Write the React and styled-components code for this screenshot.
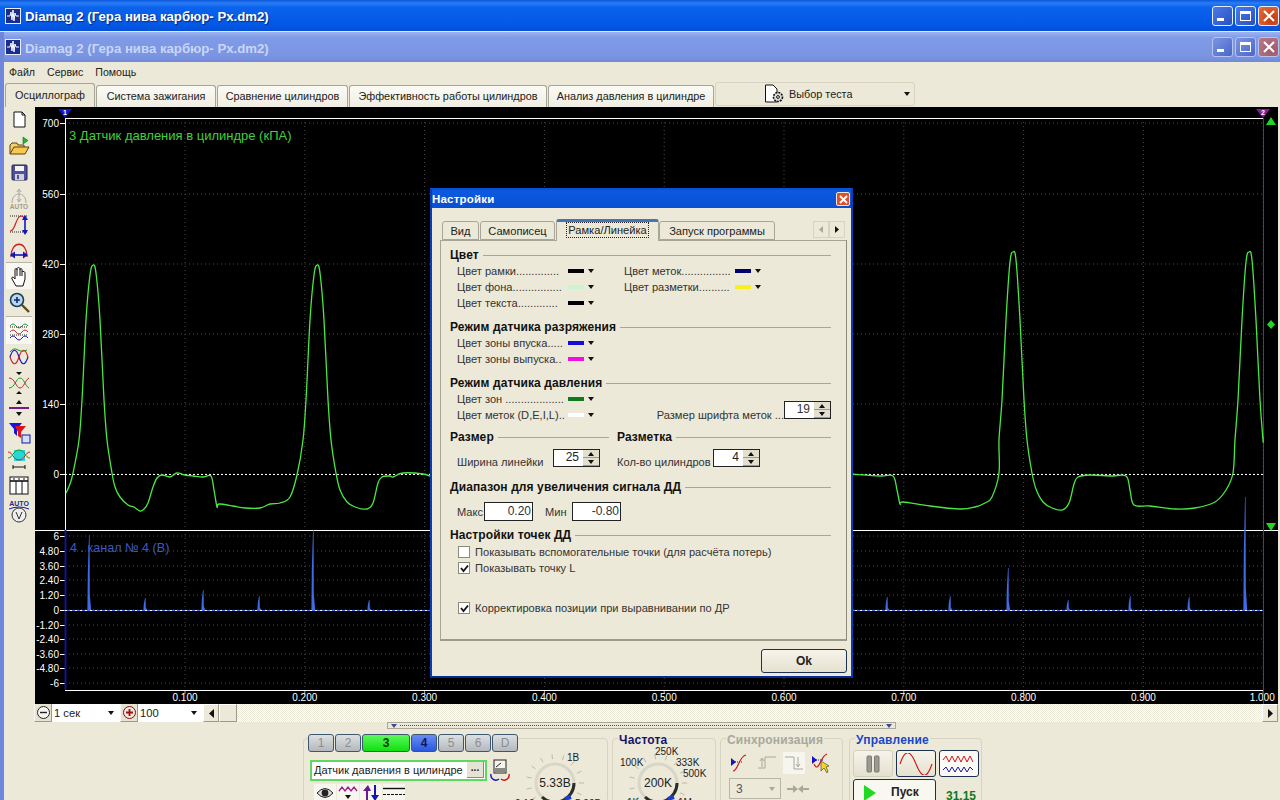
import React from "react";
import styled, { createGlobalStyle } from "styled-components";

const GlobalStyle = createGlobalStyle`
  html, body { margin: 0; padding: 0; overflow: hidden; background: #ece9d8; }
  body { font-family: "Liberation Sans", Arial, sans-serif; font-size: 11px; color: #222; }
  * { box-sizing: border-box; }
`;

/* ---------- chart data ---------- */
const peak = (cx, top) => [
  [cx - 14, 440], [cx - 11, 400], [cx - 7, 320], [cx - 3, top + 10], [cx, top],
  [cx + 3, top + 8], [cx + 7, 320], [cx + 11, 400], [cx + 14, 440],
];
const curveLeft = [
  [66, 493], [70, 484], [73, 473], ...peak(93, 265),
  [112, 473], [115, 487], [120, 497], [128, 505], [134, 507], [140, 511], [144, 509], [148, 503], [153, 487], [157, 478],
  [162, 475], [170, 477], [177, 473], [185, 475], [193, 476], [203, 477], [211, 476], [214, 490], [217, 507], [219, 504],
  [233, 506], [245, 508], [260, 508], [270, 504], [280, 503], [290, 497], [297, 475], ...peak(317, 265),
  [336, 473], [340, 490], [347, 502], [355, 507], [367, 509], [373, 503], [378, 483], [382, 477], [390, 476], [393, 477],
  [403, 473], [423, 474], [432, 477],
];
const curveRight = [
  [850, 474], [880, 476], [893, 476], [897, 490], [900, 504], [903, 502], [930, 506], [960, 509], [975, 507], [985, 503], [992, 497],
  [999, 473], ...peak(1013, 252),
  [1032, 473], [1036, 489], [1043, 502], [1052, 508], [1062, 510], [1069, 503], [1074, 484], [1078, 477], [1090, 475], [1110, 476], [1126, 476],
  [1130, 490], [1134, 505], [1150, 506], [1175, 509], [1195, 508], [1215, 502], [1226, 490], [1233, 473], ...peak(1249, 252),
  [1263, 437],
];

// catmull-rom through the points, so the trace has no corners
const smooth = (pts) => {
  let d = `M${pts[0][0]} ${pts[0][1]}`;
  for (let i = 0; i < pts.length - 1; i++) {
    const p0 = pts[i - 1] || pts[i];
    const p1 = pts[i];
    const p2 = pts[i + 1];
    const p3 = pts[i + 2] || p2;
    const c1 = [p1[0] + (p2[0] - p0[0]) / 6, p1[1] + (p2[1] - p0[1]) / 6];
    const c2 = [p2[0] - (p3[0] - p1[0]) / 6, p2[1] - (p3[1] - p1[1]) / 6];
    d += ` C${c1[0].toFixed(1)} ${c1[1].toFixed(1)} ${c2[0].toFixed(1)} ${c2[1].toFixed(1)} ${p2[0]} ${p2[1]}`;
  }
  return d;
};

const spikes = [[89, 535], [145, 598], [203, 590], [259, 596], [313, 530], [369, 600], [887, 597], [950, 596], [1008, 568], [1068, 600], [1130, 596], [1189, 597], [1245, 497]];
const xLabels = ["0.100", "0.200", "0.300", "0.400", "0.500", "0.600", "0.700", "0.800", "0.900", "1.000"];
const upperY = [["700", 123], ["560", 194], ["420", 264], ["280", 334], ["140", 404], ["0", 474]];
const lowerY = [["6", 536], ["4.80", 551], ["3.60", 566], ["2.40", 580], ["1.20", 595], ["0", 610], ["-1.20", 625], ["-2.40", 639], ["-3.60", 654], ["-4.80", 668], ["-6", 683]];

function Chart() {
  return (
    <ChartSvg viewBox="35 107 1243 597" width="1243" height="597">
      <rect x="35" y="107" width="1243" height="597" fill="#000" />
      {xLabels.map((l, i) => {
        const x = 185 + i * 119.8;
        return (
          <g key={l}>
            <line x1={x} x2={x} y1="118" y2="690" stroke="#4a4a4a" strokeDasharray="1 3" />
            <line x1={x} x2={x} y1="690" y2="694" stroke="#aaa" />
            <text x={i === 9 ? x - 1 : x} y="701" fill="#fff" fontSize="10" textAnchor="middle">{l}</text>
          </g>
        );
      })}
      {[...upperY, ...lowerY].map(([l, y], i) => (
        <g key={i}>
          <line x1="65" x2="1263" y1={y} y2={y} stroke="#4a4a4a" strokeDasharray="1 3" />
          <line x1="60" x2="65" y1={y + 0.5} y2={y + 0.5} stroke="#fff" />
          <text x="59" y={y + 4} fill="#fff" fontSize="10" textAnchor="end">{l}</text>
        </g>
      ))}
      <line x1="65" x2="1263" y1="118.5" y2="118.5" stroke="#fff" />
      <line x1="65.5" x2="65.5" y1="118" y2="530" stroke="#fff" />
      <line x1="35" x2="1278" y1="530.5" y2="530.5" stroke="#fff" />
      <line x1="65" x2="1263" y1="690.5" y2="690.5" stroke="#fff" />
      <line x1="65.5" x2="65.5" y1="530" y2="690" stroke="#14148c" strokeWidth="2" />
      <line x1="1263.5" x2="1263.5" y1="118" y2="704" stroke="#8a1a8a" />
      <line x1="65" x2="1263" y1="474.5" y2="474.5" stroke="#fff" strokeDasharray="2 2" />
      <path d={smooth(curveLeft)} fill="none" stroke="#4ae842" strokeWidth="1.3" />
      <path d={smooth(curveRight)} fill="none" stroke="#4ae842" strokeWidth="1.3" />
      {spikes.map(([x, top]) => (
        <path key={x} d={`M${x - 1.6} 610 L${x - 1.2} ${610 - (610 - top) * 0.5} L${x} ${top} L${x + 0.6} ${top} L${x + 0.8} ${610 - (610 - top) * 0.2} L${x + 2.2} 610 Z`} fill="#3f6be8" />
      ))}
      <line x1="65" x2="1263" y1="610.5" y2="610.5" stroke="#4a6cf0" />
      <line x1="65" x2="1263" y1="610.5" y2="610.5" stroke="#fff" strokeDasharray="2 3" />
      <text x="69" y="140" fill="#3fd23a" fontSize="13">3 Датчик давления в цилиндре (кПА)</text>
      <text x="70" y="552" fill="#3f58c0" fontSize="12.6">4 . канал № 4 (В)</text>
      <path d="M58 109 H72 L65 118 Z" fill="#1414c8" />
      <text x="65" y="115" fill="#fff" fontSize="7" fontWeight="bold" textAnchor="middle">1</text>
      <path d="M1256 109 H1270 L1263 118 Z" fill="#8a1a9a" />
      <text x="1263" y="115" fill="#fff" fontSize="7" fontWeight="bold" textAnchor="middle">2</text>
      <path d="M1266 125 L1271 117 L1276 125 Z" fill="#1fd81f" />
      <path d="M1271 320 L1275 324.5 L1271 329 L1267 324.5 Z" fill="#1fd81f" />
      <path d="M1266 523 H1276 L1271 531 Z" fill="#1fd81f" />
    </ChartSvg>
  );
}

/* ---------- toolbar icons ---------- */
const W = ({ children }) => <svg width="24" height="24" viewBox="0 0 24 24" fill="none">{children}</svg>;
const wave = "M3 9 q3 -4 6 0 t6 0 t6 0";
const toolIcons = [
  { h: 25, icon: <W><path d="M7 4 H15 L18 7 V19 H7 Z" fill="#fff" stroke="#111" /><path d="M15 4 V7 H18" stroke="#111" /></W> },
  { h: 26, icon: <W><path d="M3 20 V11 L5 9 H10 L11 11 H17 V13" fill="#f3d070" stroke="#5a4208" /><path d="M3 20 L7 13 H22 L18 20 Z" fill="#f8c850" stroke="#5a4208" /><path d="M16 10 V3 L21 6.5 Z" fill="#22b832" stroke="#147020" strokeWidth=".6" /></W> },
  { h: 26, icon: <W><rect x="5" y="5" width="15" height="15" rx="1" fill="#50509c" stroke="#23234e" /><rect x="8" y="6" width="9" height="5" fill="#f4f4f4" /><rect x="8" y="14" width="9" height="6" fill="#d0d0d8" /><rect x="10" y="15" width="2" height="4" fill="#50509c" /></W> },
  { h: 26, icon: <W><path d="M5 17 C5 5 19 5 19 17" stroke="#a8a8a0" /><path d="M12 4 V15 M10 6 L12 3 L14 6 M10 13 L12 16 L14 13" stroke="#a8a8a0" /><text x="12" y="23" textAnchor="middle" fontSize="6.5" fontWeight="bold" fill="#9c9c94">AUTO</text></W> },
  { h: 26, icon: <W><path d="M3 4 H20" stroke="#222" strokeDasharray="1 1" /><path d="M3 20 H20" stroke="#222" strokeDasharray="1 1" /><path d="M3 19 C9 19 8 5 14 4 C16 4 17 5 17 7" stroke="#d02020" strokeWidth="1.2" /><path d="M18 6 V20" stroke="#1414c0" strokeWidth="1.6" /><path d="M15 8 L18 3 L21 8 Z M15 18 L18 23 L21 18 Z" fill="#1414c0" /></W> },
  { h: 26, icon: <W><path d="M4 19 C4 2 20 2 20 19" stroke="#d02020" strokeWidth="1.3" /><path d="M4 17 H20" stroke="#1414c0" strokeWidth="1.6" /><path d="M8 13.5 L3 17 L8 20.5 Z M16 13.5 L21 17 L16 20.5 Z" fill="#1414c0" /></W> },
  { h: 27, pressed: true, icon: <W><path d="M9 22 L5 15 C4 13 6 12 8 15 V6 C8 4 10 4 10 6 V5 C10 3 13 3 13 5 V6 C13 4 15 4 15 6 V8 C15 7 18 7 18 9 V15 L16 22 Z" fill="#fff" stroke="#111" /><path d="M10 6 V12 M13 6 V12 M15 8 V12" stroke="#111" /></W> },
  { h: 25, icon: <W><path d="M15 15 L22 22" stroke="#5a4a18" strokeWidth="2.4" /><circle cx="10" cy="10" r="6.5" fill="#b8d8f0" stroke="#1c3c5c" strokeWidth="1.6" /><path d="M7 10 H13 M10 7 V13" stroke="#102a6a" strokeWidth="1.6" /></W> },
  { h: 28, mt: 2, pressed: true, icon: <W><path d={wave} stroke="#1c9a2c" transform="translate(0 -2)" /><path d="M3 8 H21 M3 16 H21" stroke="#222" strokeDasharray="1 1" /><path d={wave} stroke="#d02020" transform="translate(0 4)" /><path d={wave} stroke="#1414c0" transform="translate(0 10)" /></W> },
  { h: 25, icon: <W><path d="M3 12 C6 3 9 3 12 12 S18 21 21 12" stroke="#1414c0" strokeWidth="1.2" /><path d="M3 12 C6 21 9 21 12 12 S18 3 21 12" stroke="#d02020" strokeWidth="1.2" /><path d="M3 7 q4 -5 8 -2 t9 0" stroke="#1c9a2c" /></W> },
  { h: 26, icon: <W><path d="M2 7 C8 7 9 17 13 17 S18 9 22 7" stroke="#d02020" /><path d="M2 17 C8 17 9 7 13 7 S18 15 22 17" stroke="#1c9a2c" /><path d="M9 1 H15 L12 4 Z M9 23 H15 L12 20 Z" fill="#111" /></W> },
  { h: 25, icon: <W><path d="M2 12 H22" stroke="#7a1a8a" strokeWidth="2" /><path d="M9 8 H15 L12 4 Z M9 16 H15 L12 20 Z" fill="#111" /></W> },
  { h: 25, icon: <W><path d="M2 2 H15 L10 8 V15 L7 12 V8 Z" fill="#1414e0" /><path d="M8 5 H19 L14 11 V17 L11 15 V11 Z" fill="#e01414" /><rect x="15" y="14" width="8" height="8" fill="#cfe0f8" stroke="#1414a0" /></W> },
  { h: 26, icon: <W><path d="M7 3 H18 V14 H7 Z" fill="#22d8d8" /><path d="M1 5 C6 5 6 13 12 13 S18 5 23 5" stroke="#d02020" /><path d="M1 11 C6 11 6 3 12 3 S18 11 23 11" stroke="#1c9a2c" /><path d="M6 20 H18 M6 18 V22 M18 18 V22" stroke="#111" /></W> },
  { h: 26, icon: <W><rect x="3" y="4" width="18" height="17" fill="#fff" stroke="#111" /><path d="M3 8 H21" stroke="#111" strokeWidth="1.6" /><path d="M6 6 H8 M11 6 H13 M16 6 H18" stroke="#888" strokeWidth="2" /><path d="M9 8 V21 M15 8 V21" stroke="#111" /></W> },
  { h: 26, icon: <W><text x="12" y="7" textAnchor="middle" fontSize="7" fontWeight="bold" fill="#1a2a8a">AUTO</text><path d="M2 10 Q12 6 22 10" stroke="#1414c0" /><circle cx="12" cy="16" r="7" fill="#eee" stroke="#333" /><path d="M9 13 L12 20 L15 13" stroke="#333" /></W> },
];

/* ---------- small parts ---------- */
function WinButtons({ $faded }) {
  return (
    <WinBtnRow>
      <WinBtn $faded={$faded}><MinGlyph /></WinBtn>
      <WinBtn $faded={$faded}><MaxGlyph /></WinBtn>
      <WinBtn $faded={$faded} $close><CloseGlyph viewBox="0 0 12 12"><path d="M1 1 L11 11 M11 1 L1 11" stroke="#fff" strokeWidth="2.2" /></CloseGlyph></WinBtn>
    </WinBtnRow>
  );
}

const AppGlyph = () => (
  <svg width="16" height="16" viewBox="0 0 16 16">
    <rect x="0.5" y="0.5" width="15" height="15" fill="#1c2c8c" stroke="#e8ecff" />
    <path d="M2 8 H5 L6 4 L7 12 L8 2 L9 13 L10 5 L11 8 H14" stroke="#fff" fill="none" />
  </svg>
);

const SpinBox = ({ value, $w, $raise }) => (
  <Spin $w={$w} $raise={$raise}>
    <SpinValue>{value}</SpinValue>
    <SpinArrows>
      <SpinArrow><TriUp /></SpinArrow>
      <SpinArrow><TriDown /></SpinArrow>
    </SpinArrows>
  </Spin>
);

const ColorItem = ({ label, color }) => (
  <ColorCell>
    <ColorLabel>{label}</ColorLabel>
    <Swatch $color={color} />
    <TriDown />
  </ColorCell>
);

const Check = ({ checked, children, $top }) => (
  <CheckRow $top={$top}>
    <CheckBox>
      {checked && <svg width="9" height="9" viewBox="0 0 9 9"><path d="M1 4 L3.5 7 L8 1.5" stroke="#111" strokeWidth="1.8" fill="none" /></svg>}
    </CheckBox>
    {children}
  </CheckRow>
);

function Dial({ value, w, cx, labels, dim }) {
  const ticks = Array.from({ length: 15 }, (_, i) => (i * 24 - 168) * (Math.PI / 180));
  return (
    <DialSvg width={w} height="70" viewBox={`0 0 ${w} 70`} $mt={dim}>
      {ticks.map((a, i) => (
        <line key={i} x1={cx + Math.cos(a) * 24} y1={38 + Math.sin(a) * 24} x2={cx + Math.cos(a) * 29} y2={38 + Math.sin(a) * 29} stroke="#bcb9a8" />
      ))}
      <circle cx={cx} cy="38" r="19" fill="#ece9d8" stroke="#d8d6c8" strokeWidth="3" />
      <path d={`M${cx + 19} 38 A19 19 0 0 1 ${cx - 13} 52`} fill="none" stroke="#2e2e28" strokeWidth="3" />
      <path d={`M${cx + 10} 54 L${cx + 16} 52`} stroke="#1c3cd0" strokeWidth="4" />
      <text x={cx} y="42" fontSize="12" textAnchor="middle" fill="#222">{value}</text>
      {labels.map(([t, x, y]) => <text key={t} x={x} y={y} fontSize="10" fill="#222">{t}</text>)}
    </DialSvg>
  );
}

const SyncIcon = ({ children, $light }) => <SyncBtn $light={$light}><svg width="22" height="22" viewBox="0 0 22 22" fill="none">{children}</svg></SyncBtn>;

export default function App() {
  return (
    <>
      <GlobalStyle />
      <Desktop>
        <TitleBar>
          <AppGlyph />
          <TitleText>Diamag 2 (Гера нива карбюр- Px.dm2)</TitleText>
          <WinButtons />
        </TitleBar>
        <InnerWindow>
          <TitleBar $inactive>
            <AppGlyph />
            <TitleText $inactive>Diamag 2 (Гера нива карбюр- Px.dm2)</TitleText>
            <WinButtons $faded />
          </TitleBar>
          <MenuBar>
            <span>Файл</span>
            <span>Сервис</span>
            <span>Помощь</span>
          </MenuBar>
          <TabBar>
            <MainTab $w={90} $active>Осциллограф</MainTab>
            <MainTab $w={120}>Система зажигания</MainTab>
            <MainTab $w={131}>Сравнение цилиндров</MainTab>
            <MainTab $w={198}>Эффективность работы цилиндров</MainTab>
            <MainTab $w={166}>Анализ давления в цилиндре</MainTab>
            <TestPicker>
              <svg width="22" height="20" viewBox="0 0 22 20" fill="none">
                <path d="M1.5 1 H9 L13 5 V18 H1.5 Z" fill="#fff" stroke="#111" />
                <circle cx="14" cy="13" r="4.5" fill="#ddd" stroke="#111" strokeWidth="1.6" strokeDasharray="2 1" />
                <circle cx="14" cy="13" r="1.4" fill="#fff" stroke="#111" />
              </svg>
              <span>Выбор теста</span>
              <TriDown />
            </TestPicker>
          </TabBar>
          <Workspace>
            <ToolColumn>
              {toolIcons.map((t, i) => (
                <ToolBtn key={i} $h={t.h} $mt={t.mt} $pressed={t.pressed}>{t.icon}</ToolBtn>
              ))}
            </ToolColumn>
            <Chart />
          </Workspace>
          <ScaleRow>
            <RoundBtn>
              <svg width="15" height="15" viewBox="0 0 15 15"><circle cx="7.5" cy="7.5" r="6" fill="#f6f6f0" stroke="#222" /><path d="M4 7.5 H11" stroke="#222" strokeWidth="1.4" /></svg>
            </RoundBtn>
            <ScaleCombo $w={68}>1 сек<TriDown /></ScaleCombo>
            <RoundBtn>
              <svg width="15" height="15" viewBox="0 0 15 15"><circle cx="7.5" cy="7.5" r="6" fill="#f6e8e0" stroke="#7a1010" /><path d="M4 7.5 H11 M7.5 4 V11" stroke="#a01010" strokeWidth="1.8" /></svg>
            </RoundBtn>
            <ScaleCombo $w={65}>100<TriDown /></ScaleCombo>
            <ScrollBtn><svg width="5" height="9" viewBox="0 0 5 9"><path d="M5 0 L0 4.5 L5 9 Z" fill="#111" /></svg></ScrollBtn>
            <ScrollThumb />
            <ScrollTrack />
            <ScrollBtn><svg width="5" height="9" viewBox="0 0 5 9"><path d="M0 0 L5 4.5 L0 9 Z" fill="#111" /></svg></ScrollBtn>
          </ScaleRow>
          <SplitRow>
            <Splitter>
              <TriDown $color="#3a4a9a" />
              <SplitDots />
              <TriDown $color="#3a4a9a" />
            </Splitter>
          </SplitRow>
          <BottomPanel>
            <Group $w={305}>
              <GroupInner>
                <ChannelCol>
                  <ChannelRow>
                    {[["1"], ["2"], ["3", "green"], ["4", "blue"], ["5"], ["6"], ["D"]].map(([n, kind]) => (
                      <ChannelBtn key={n} $kind={kind}>{n}</ChannelBtn>
                    ))}
                  </ChannelRow>
                  <SensorRow>
                    <SensorBox>
                      <span>Датчик давления в цилиндре</span>
                      <DotsBtn>...</DotsBtn>
                    </SensorBox>
                    <svg width="20" height="22" viewBox="0 0 20 22" fill="none">
                      <rect x="4" y="1" width="12" height="13" fill="#f4f4ec" stroke="#222" />
                      <rect x="5" y="9" width="10" height="4" fill="#8a8a80" />
                      <path d="M6 8 L11 4" stroke="#222" />
                      <path d="M1 15 A5 5 0 0 0 9 20" stroke="#1414b0" strokeWidth="1.4" />
                      <path d="M19 15 A5 5 0 0 1 11 20" stroke="#d01414" strokeWidth="1.4" />
                    </svg>
                  </SensorRow>
                  <ViewRow>
                    <ViewBtn><svg width="18" height="12" viewBox="0 0 18 12"><path d="M1 6 Q9 -3 17 6 Q9 15 1 6 Z" fill="#ddd" stroke="#222" /><circle cx="9" cy="6" r="3.4" fill="#222" /></svg></ViewBtn>
                    <ViewBtn><svg width="20" height="16" viewBox="0 0 20 16" fill="none"><path d="M1 6 L4 2 L7 6 L10 2 L13 6 L16 2 L19 6" stroke="#a01a8a" strokeWidth="1.3" /><path d="M7 10 H13 L10 14 Z" fill="#111" /></svg></ViewBtn>
                    <ViewBtn><svg width="18" height="16" viewBox="0 0 18 16"><path d="M4 16 V6 H1 L6 0 L9 6 H6 V16 Z" fill="#6a1a8a" /><path d="M12 0 V10 H9 L13 16 L17 10 H14 V0 Z" fill="#1414b0" /></svg></ViewBtn>
                    <ViewBtn><svg width="22" height="14" viewBox="0 0 22 14"><path d="M0 2.5 H22" stroke="#111" strokeWidth="1.4" /><path d="M0 8.5 H22" stroke="#111" strokeDasharray="3 1" /></svg></ViewBtn>
                  </ViewRow>
                </ChannelCol>
                <Dial value="5.33В" w={94} cx={39} dim={11} labels={[["1В", 51, 16], ["0.10", -1, 62], ["5.00В", 59, 62]]} />
              </GroupInner>
            </Group>
            <Group $w={104}>
              <GroupTitle $color="#14146e">Частота</GroupTitle>
              <Dial value="200K" w={102} cx={45} dim={-2} labels={[["250K", 42, 10], ["100K", 7, 21], ["333K", 63, 21], ["500K", 70, 32], ["1K", 14, 61], ["1M", 65, 61]]} />
            </Group>
            <Group $w={123}>
              <GroupTitle $color="#a8a89c">Синхронизация</GroupTitle>
              <SyncRow>
                <SyncIcon>
                  <path d="M2 10 H14" stroke="#1414b0" strokeDasharray="1 1" /><path d="M2 6 L7 10 L2 14 Z" fill="#1414c0" /><path d="M4 19 C9 19 10 4 17 3" stroke="#d01414" strokeWidth="1.2" />
                </SyncIcon>
                <SyncIcon>
                  <path d="M2 16 H9 V5 H20" stroke="#a8a89c" /><path d="M6 7 V15 M4 9 L6 6 L8 9" stroke="#a8a89c" />
                </SyncIcon>
                <SyncIcon $light>
                  <path d="M2 5 H11 V17 H20" stroke="#a8a89c" /><path d="M15 5 V14 M13 12 L15 15 L17 12" stroke="#a8a89c" />
                </SyncIcon>
                <SyncIcon>
                  <path d="M2 8 H14" stroke="#1414b0" strokeDasharray="1 1" /><path d="M2 4 L7 8 L2 12 Z" fill="#1414c0" /><path d="M4 12 C9 22 10 4 17 2" stroke="#d01414" strokeWidth="1.2" /><path d="M11 9 L11 19 L14 16 L17 21 L18 19 L16 15 L19 14 Z" fill="#f4d820" stroke="#333" strokeWidth=".6" />
                </SyncIcon>
              </SyncRow>
              <SyncRow $gap={6}>
                <SyncCombo>3<TriDown $color="#a8a89c" /></SyncCombo>
                <svg width="22" height="10" viewBox="0 0 22 10"><path d="M0 5 H8 M14 5 H22" stroke="#a8a89c" strokeWidth="2" /><path d="M6 1 L11 5 L6 9 Z M16 1 L11 5 L16 9 Z" fill="#a8a89c" /></svg>
              </SyncRow>
            </Group>
            <Group $w={133} $ml={2}>
              <GroupTitle $color="#1a46c8">Управление</GroupTitle>
              <CtrlRow $top={3}>
                <CtrlBtn $flat>
                  <svg width="14" height="18" viewBox="0 0 14 18"><rect x="1" y="1" width="4.5" height="16" rx="1" fill="#9a9a90" stroke="#7a7a70" /><rect x="8.5" y="1" width="4.5" height="16" rx="1" fill="#9a9a90" stroke="#7a7a70" /></svg>
                </CtrlBtn>
                <CtrlBtn>
                  <svg width="34" height="22" viewBox="0 0 34 22" fill="none"><path d="M1 11 C6 -4 11 -4 17 11 S28 26 33 11" stroke="#d01414" strokeWidth="1.1" /></svg>
                </CtrlBtn>
                <CtrlBtn $light>
                  <svg width="34" height="22" viewBox="0 0 34 22" fill="none"><path d="M1 7 l3 -4 3 6 3 -6 3 6 3 -6 3 6 3 -6 3 6 3 -6 3 6" stroke="#d01414" /><path d="M1 17 l3 -3 3 5 3 -5 3 5 3 -5 3 5 3 -5 3 5 3 -5 3 3" stroke="#1414b0" /></svg>
                </CtrlBtn>
              </CtrlRow>
              <CtrlRow $top={2}>
                <StartBtn>
                  <svg width="12" height="16" viewBox="0 0 12 16"><path d="M0 0 L12 8 L0 16 Z" fill="#22d822" /></svg>
                  <StartText>Пуск</StartText>
                </StartBtn>
                <Counter>31.15</Counter>
              </CtrlRow>
            </Group>
          </BottomPanel>
        </InnerWindow>

        <Dialog>
          <DialogTitle>
            <span>Настройки</span>
            <DialogClose><svg width="9" height="9" viewBox="0 0 9 9"><path d="M1 1 L8 8 M8 1 L1 8" stroke="#fff" strokeWidth="1.8" /></svg></DialogClose>
          </DialogTitle>
          <DialogBody>
            <DialogTabs>
              <DlgTab $w={37}>Вид</DlgTab>
              <DlgTab $w={75}>Самописец</DlgTab>
              <DlgTab $w={103} $active><FocusText>Рамка/Линейка</FocusText></DlgTab>
              <DlgTab $w={116}>Запуск программы</DlgTab>
              <TabArrows>
                <TabArrow><svg width="4" height="7" viewBox="0 0 4 7"><path d="M4 0 L0 3.5 L4 7 Z" fill="#a8a89c" /></svg></TabArrow>
                <TabArrow><svg width="4" height="7" viewBox="0 0 4 7"><path d="M0 0 L4 3.5 L0 7 Z" fill="#111" /></svg></TabArrow>
              </TabArrows>
            </DialogTabs>
            <Pane>
              <Heading>Цвет</Heading>
              <ColorGrid>
                <ColorItem label="Цвет рамки.............." color="#000" />
                <ColorItem label="Цвет меток................" color="#00006e" />
                <ColorItem label="Цвет фона................" color="#c8f4d0" />
                <ColorItem label="Цвет разметки.........." color="#f6f020" />
                <ColorItem label="Цвет текста............." color="#000" />
              </ColorGrid>

              <Heading $top={8}>Режим датчика разряжения</Heading>
              <ColorGrid>
                <ColorItem label="Цвет зоны впуска....." color="#1010d8" />
                <span />
                <ColorItem label="Цвет зоны выпуска.." color="#f010e0" />
              </ColorGrid>

              <Heading $top={8}>Режим датчика давления</Heading>
              <ColorGrid>
                <ColorItem label="Цвет зон ..................." color="#0e7a1c" />
                <span />
                <ColorItem label="Цвет меток (D,E,I,L).." color="#fff" />
                <FontSizeCell>
                  <span>Размер шрифта меток ...</span>
                  <SpinBox value="19" $w={47} $raise />
                </FontSizeCell>
              </ColorGrid>

              <TwoHeads>
                <Heading $w={159}>Размер</Heading>
                <Heading $w={214}>Разметка</Heading>
              </TwoHeads>
              <SizeRow>
                <SizeCell $w={160}>
                  <SizeLabel $w={96}>Ширина линейки</SizeLabel>
                  <SpinBox value="25" $w={47} />
                </SizeCell>
                <SizeCell>
                  <SizeLabel $w={96}>Кол-во цилиндров</SizeLabel>
                  <SpinBox value="4" $w={47} />
                </SizeCell>
              </SizeRow>

              <Heading $top={10}>Диапазон для увеличения сигнала ДД</Heading>
              <RangeRow>
                <span>Макс</span>
                <RangeInput>0.20</RangeInput>
                <span>Мин</span>
                <RangeInput>-0.80</RangeInput>
              </RangeRow>

              <Heading $top={6}>Настройки точек ДД</Heading>
              <Check $top={1}>Показывать вспомогательные точки (для расчёта потерь)</Check>
              <Check checked>Показывать точку L</Check>
              <Check checked $top={24}>Корректировка позиции при выравнивании по ДР</Check>
            </Pane>
            <DialogFooter>
              <OkBtn>Ok</OkBtn>
            </DialogFooter>
          </DialogBody>
        </Dialog>
      </Desktop>
    </>
  );
}

/* ---------- layout ---------- */
const Desktop = styled.div`
  position: relative;
  width: 1280px;
  height: 800px;
  overflow: hidden;
  display: flex;
  flex-direction: column;
  background: #ece9d8;
`;

const TitleBar = styled.div`
  flex: none;
  height: ${(p) => (p.$inactive ? 30 : 31)}px;
  margin-bottom: ${(p) => (p.$inactive ? 0 : 1)}px;
  display: flex;
  align-items: center;
  padding: 0 1px 0 ${(p) => (p.$inactive ? 1 : 5)}px;
  gap: 4px;
  background: ${(p) =>
    p.$inactive
      ? "linear-gradient(180deg, #9db4ee 0, #7f9ae6 20%, #7b95e2 80%, #6f8ad8 100%)"
      : "linear-gradient(180deg, #0a58dc 0, #2a7df5 10%, #0b62ec 24%, #0358e6 80%, #0450d6 100%)"};
`;

const TitleText = styled.div`
  flex: 1;
  padding-top: ${(p) => (p.$inactive ? 3 : 1)}px;
  font-size: 13.2px;
  font-weight: bold;
  color: ${(p) => (p.$inactive ? "#c9d6f8" : "#fff")};
  text-shadow: ${(p) => (p.$inactive ? "none" : "1px 1px 1px #0a2a80")};
`;

const WinBtnRow = styled.div`
  display: flex;
  gap: 2px;
`;

const WinBtn = styled.div`
  width: 21px;
  height: 20px;
  border: 1px solid ${(p) => (p.$faded ? "#b6c4f0" : "#e8eefc")};
  border-radius: 3px;
  display: flex;
  align-items: center;
  justify-content: center;
  background: ${(p) =>
    p.$close
      ? p.$faded
        ? "radial-gradient(circle at 70% 70%, #a05868, #b87a8a)"
        : "radial-gradient(circle at 70% 70%, #c23a10, #e8703c)"
      : p.$faded
      ? "linear-gradient(135deg, #7c96e4, #4a66c8)"
      : "linear-gradient(135deg, #4a7be8, #2a50c0)"};
`;

const MinGlyph = styled.div`
  width: 7px;
  height: 3px;
  background: #fff;
  align-self: flex-end;
  margin: 0 5px 4px 0;
`;

const MaxGlyph = styled.div`
  width: 11px;
  height: 10px;
  border: 1px solid #fff;
  border-top-width: 3px;
`;

const CloseGlyph = styled.svg`
  width: 12px;
  height: 12px;
`;

const InnerWindow = styled.div`
  flex: 1;
  min-height: 0;
  display: flex;
  flex-direction: column;
  border-left: 4px solid #6f86dc;
`;

const MenuBar = styled.div`
  flex: none;
  height: 20px;
  display: flex;
  align-items: center;
  gap: 12px;
  padding-left: 5px;
  background: #ece9d8;
  font-size: 10.6px;
`;

const TabBar = styled.div`
  flex: none;
  height: 25px;
  display: flex;
  align-items: flex-end;
  gap: 1px;
  padding-left: 1px;
  background: #ece9d8;
`;

const MainTab = styled.div`
  flex: none;
  width: ${(p) => p.$w}px;
  height: ${(p) => (p.$active ? 24 : 22)}px;
  display: flex;
  align-items: center;
  justify-content: center;
  padding-bottom: 2px;
  font-size: 10.85px;
  white-space: nowrap;
  border: 1px solid #a6a597;
  border-bottom: none;
  border-radius: 3px 3px 0 0;
  background: ${(p) => (p.$active ? "#ece9d8" : "linear-gradient(180deg, #fbfaf5, #f0eee2)")};
`;

const TestPicker = styled.div`
  flex: none;
  width: 200px;
  height: 24px;
  margin-bottom: 1px;
  display: flex;
  align-items: center;
  padding: 0 4px 0 48px;
  gap: 3px;
  border: 1px solid #d6d3c2;
  border-radius: 3px;
  background: #ece9d8;
  font-size: 10.85px;
  span {
    flex: 1;
  }
`;

const Workspace = styled.div`
  flex: none;
  height: 597px;
  display: flex;
`;

const ToolColumn = styled.div`
  flex: none;
  width: 31px;
  display: flex;
  flex-direction: column;
  align-items: center;
  padding: 0 2px 0 1px;
  background: #ece9d8;
`;

const ToolBtn = styled.div`
  flex: none;
  width: 26px;
  height: ${(p) => p.$h}px;
  margin-top: ${(p) => p.$mt || 0}px;
  display: flex;
  align-items: center;
  justify-content: center;
  background: ${(p) => (p.$pressed ? "#f8f7f1" : "transparent")};
  border-top: 1px solid ${(p) => (p.$pressed ? "#b8b6a6" : "transparent")};
`;

const ChartSvg = styled.svg`
  display: block;
  flex: none;
`;

const ScaleRow = styled.div`
  flex: none;
  height: 18px;
  display: flex;
  padding-left: 30px;
  padding-right: 2px;
`;

const RoundBtn = styled.div`
  flex: none;
  width: 18px;
  display: flex;
  align-items: center;
  justify-content: center;
  background: #e6e3d2;
  border-right: 1px solid #9c9a8a;
  border-bottom: 1px solid #9c9a8a;
  border-left: 1px solid #f8f8f2;
`;

const ScaleCombo = styled.div`
  flex: none;
  width: ${(p) => p.$w}px;
  display: flex;
  align-items: center;
  justify-content: space-between;
  padding: 0 6px 0 2px;
  background: #fff;
  font-size: 11.2px;
`;

const ScrollBtn = styled.div`
  flex: none;
  width: 16px;
  display: flex;
  align-items: center;
  justify-content: center;
  background: #ece9d8;
  border: 1px solid #fff;
  border-right-color: #9c9a8a;
  border-bottom-color: #9c9a8a;
`;

const ScrollThumb = styled(ScrollBtn)`
  width: 18px;
`;

const ScrollTrack = styled.div`
  flex: 1;
  background: repeating-conic-gradient(#ece9d8 0 25%, #fff 0 50%) 0 0 / 2px 2px;
`;

const SplitRow = styled.div`
  flex: none;
  height: 8px;
  padding-left: 383px;
`;

const Splitter = styled.div`
  width: 509px;
  height: 7px;
  display: flex;
  align-items: center;
  gap: 3px;
  padding: 0 3px;
  border: 1px solid #aca899;
  background: #ece9d8;
`;

const SplitDots = styled.div`
  flex: 1;
  border-top: 1px dotted #3a4a9a;
`;

const BottomPanel = styled.div`
  flex: none;
  height: 70px;
  display: flex;
  gap: 4px;
  padding: 8px 0 0 299px;
`;

const Group = styled.div`
  flex: none;
  width: ${(p) => p.$w}px;
  height: 90px;
  margin-left: ${(p) => p.$ml || 0}px;
  display: flex;
  flex-direction: column;
  border: 1px solid #d6d3c2;
  border-radius: 4px;
`;

const GroupInner = styled.div`
  display: flex;
  padding-left: 4px;
  margin-top: -5px;
`;

const GroupTitle = styled.div`
  flex: none;
  align-self: flex-start;
  height: 14px;
  line-height: 14px;
  margin: -6px 0 0 5px;
  padding: 0 1px;
  background: #ece9d8;
  font-size: 12px;
  font-weight: bold;
  letter-spacing: 0.2px;
  color: ${(p) => p.$color};
`;

const ChannelCol = styled.div`
  flex: none;
  width: 208px;
  display: flex;
  flex-direction: column;
`;

const ChannelRow = styled.div`
  display: flex;
  gap: 1px;
`;

const ChannelBtn = styled.div`
  flex: none;
  width: ${(p) => (p.$kind === "green" ? 48 : 26)}px;
  height: 18px;
  display: flex;
  align-items: center;
  justify-content: center;
  border: 1px solid #3c5870;
  border-radius: 3px;
  font-size: 12px;
  font-weight: ${(p) => (p.$kind ? "bold" : "normal")};
  color: ${(p) => (p.$kind === "green" ? "#063a06" : p.$kind === "blue" ? "#0a1a5a" : "#8a8e92")};
  background: ${(p) =>
    p.$kind === "green"
      ? "linear-gradient(180deg, #5cf85c, #10e010)"
      : p.$kind === "blue"
      ? "linear-gradient(180deg, #6c8cf4, #2a58e0)"
      : "linear-gradient(180deg, #dde0e2, #b4b8bc)"};
`;

const SensorRow = styled.div`
  display: flex;
  align-items: center;
  gap: 3px;
  margin: 7px 0 0 2px;
`;

const SensorBox = styled.div`
  flex: none;
  width: 177px;
  height: 21px;
  display: flex;
  align-items: center;
  justify-content: space-between;
  padding: 0 1px 0 2px;
  background: #fff;
  border: 2px solid #5ed85e;
  font-size: 11px;
  white-space: nowrap;
`;

const DotsBtn = styled.div`
  flex: none;
  width: 17px;
  height: 16px;
  display: flex;
  align-items: center;
  justify-content: center;
  font-weight: bold;
  font-size: 10px;
  line-height: 8px;
  padding-bottom: 4px;
  background: #e6e3d2;
  border-right: 1px solid #8c8a7a;
  border-bottom: 1px solid #8c8a7a;
`;

const ViewRow = styled.div`
  display: flex;
  margin: 3px 0 0 6px;
  gap: 1px;
`;

const ViewBtn = styled.div`
  flex: none;
  width: 22px;
  height: 18px;
  display: flex;
  align-items: center;
  justify-content: center;
  background: #f6f5ee;
`;

const DialSvg = styled.svg`
  flex: none;
  overflow: visible;
  margin-top: ${(p) => p.$mt}px;
`;

const SyncRow = styled.div`
  display: flex;
  align-items: center;
  gap: ${(p) => (p.$gap === undefined ? 5 : p.$gap)}px;
  padding-left: 8px;
  margin-top: ${(p) => (p.$gap === undefined ? 5 : 4)}px;
`;

const SyncBtn = styled.div`
  flex: none;
  width: 22px;
  height: 22px;
  background: ${(p) => (p.$light ? "#f6f5ee" : "transparent")};
`;

const SyncCombo = styled.div`
  flex: none;
  width: 52px;
  height: 21px;
  display: flex;
  align-items: center;
  justify-content: space-between;
  padding: 0 5px 0 6px;
  border: 1px solid #b8b6a6;
  font-size: 12px;
  color: #555;
`;

const CtrlRow = styled.div`
  display: flex;
  align-items: center;
  gap: 3px;
  padding-left: 3px;
  margin-top: ${(p) => p.$top}px;
`;

const CtrlBtn = styled.div`
  flex: none;
  width: 40px;
  height: 27px;
  display: flex;
  align-items: center;
  justify-content: center;
  border-radius: 3px;
  border: 1px solid ${(p) => (p.$flat ? "#d0cebc" : "#1c3050")};
  background: ${(p) => (p.$light ? "#fbfaf6" : "linear-gradient(180deg, #f6f4ea, #e4e1d0)")};
`;

const StartBtn = styled.div`
  flex: none;
  width: 83px;
  height: 27px;
  display: flex;
  align-items: flex-start;
  padding: 5px 0 0 10px;
  border: 1px solid #1c3050;
  border-radius: 3px;
  background: #f8f7f0;
`;

const StartText = styled.span`
  margin-left: 15px;
  font-weight: bold;
  font-size: 12px;
`;

const Counter = styled.div`
  margin: 7px 0 0 7px;
  font-size: 12px;
  font-weight: bold;
  color: #0e7a1c;
`;

/* ---------- dialog ---------- */
const Dialog = styled.div`
  position: absolute;
  left: 430px;
  top: 188px;
  width: 423px;
  height: 490px;
  display: flex;
  flex-direction: column;
  border: 2px solid #0a3cb8;
  border-top-color: #0a50d8;
  border-bottom-color: #082a90;
  background: #ece9d8;
`;

const DialogTitle = styled.div`
  flex: none;
  height: 18px;
  display: flex;
  align-items: center;
  justify-content: space-between;
  padding: 0 1px 0 0;
  background: linear-gradient(180deg, #0a5ae0, #0a4fd2);
  color: #fff;
  font-size: 11.5px;
  font-weight: bold;
  letter-spacing: 0.2px;
`;

const DialogClose = styled.div`
  width: 14px;
  height: 14px;
  display: flex;
  align-items: center;
  justify-content: center;
  border: 1px solid #f0e6e0;
  border-radius: 2px;
  background: #d8542c;
`;

const DialogBody = styled.div`
  flex: 1;
  min-height: 0;
  display: flex;
  flex-direction: column;
  padding: 12px 4px 0 8px;
`;

const DialogTabs = styled.div`
  flex: none;
  height: 20px;
  display: flex;
  align-items: flex-end;
  padding-left: 2px;
  position: relative;
  z-index: 1;
`;

const DlgTab = styled.div`
  flex: none;
  width: ${(p) => p.$w}px;
  height: ${(p) => (p.$active ? 22 : 19)}px;
  margin: 0 ${(p) => (p.$active ? 0 : 1)}px ${(p) => (p.$active ? -1 : 0)}px 0;
  padding-bottom: ${(p) => (p.$active ? 3 : 0)}px;
  display: flex;
  align-items: center;
  justify-content: center;
  font-size: 11.1px;
  white-space: nowrap;
  border: 1px solid #a6a597;
  border-bottom: ${(p) => (p.$active ? "none" : "1px solid #a6a597")};
  border-top: ${(p) => (p.$active ? "3px solid #4a72b8" : "1px solid #a6a597")};
  border-radius: 3px 3px 0 0;
  background: #ece9d8;
`;

const FocusText = styled.span`
  outline: 1px dotted #222;
  padding: 0 1px;
  line-height: 14px;
`;

const TabArrows = styled.div`
  display: flex;
  margin: 0 2px 2px auto;
  height: 17px;
`;

const TabArrow = styled.div`
  width: 16px;
  display: flex;
  align-items: center;
  justify-content: center;
  background: #ece9d8;
  border: 1px solid #d6d3c2;
`;

const Pane = styled.div`
  flex: none;
  height: 401px;
  padding: 6px 15px 0 9px;
  border: 1px solid #a6a597;
  border-right-color: #8c8a7a;
  border-bottom: 2px solid #9c9a8a;
`;

const Heading = styled.div`
  width: ${(p) => (p.$w ? `${p.$w}px` : "auto")};
  height: 16px;
  margin-top: ${(p) => p.$top || 0}px;
  display: flex;
  align-items: center;
  gap: 4px;
  font-size: 12px;
  font-weight: bold;
  letter-spacing: 0.1px;
  color: #111;
  white-space: nowrap;
  &::after {
    content: "";
    flex: 1;
    border-top: 1px solid #a8a698;
  }
`;

const ColorGrid = styled.div`
  display: grid;
  grid-template-columns: 167px 1fr;
  grid-auto-rows: 16px;
  padding-left: 7px;
`;

const ColorCell = styled.div`
  display: flex;
  align-items: center;
  color: #333;
  font-size: 11.1px;
`;

const ColorLabel = styled.span`
  flex: none;
  width: 111px;
  overflow: hidden;
  white-space: nowrap;
`;

const Swatch = styled.span`
  flex: none;
  width: 16px;
  height: 4px;
  margin-right: 4px;
  background: ${(p) => p.$color};
`;

const TriDown = styled.i`
  flex: none;
  display: block;
  width: 0;
  height: 0;
  border-left: 3.5px solid transparent;
  border-right: 3.5px solid transparent;
  border-top: 4px solid ${(p) => p.$color || "#111"};
`;

const TriUp = styled.i`
  flex: none;
  display: block;
  width: 0;
  height: 0;
  border-left: 3.5px solid transparent;
  border-right: 3.5px solid transparent;
  border-bottom: 4px solid #111;
`;

const FontSizeCell = styled.div`
  display: flex;
  align-items: center;
  justify-content: flex-end;
  color: #333;
  font-size: 11.1px;
  white-space: nowrap;
`;

const Spin = styled.div`
  flex: none;
  width: ${(p) => p.$w}px;
  height: 18px;
  margin-top: ${(p) => (p.$raise ? -10 : 0)}px;
  display: flex;
  align-items: stretch;
  background: #fff;
  border: 1px solid #222;
`;

const SpinValue = styled.div`
  flex: 1;
  text-align: right;
  padding-right: 4px;
  line-height: 15px;
  font-size: 12px;
`;

const SpinArrows = styled.div`
  flex: none;
  width: 16px;
  display: flex;
  flex-direction: column;
`;

const SpinArrow = styled.div`
  flex: 1;
  display: flex;
  align-items: center;
  justify-content: center;
  background: #e2dfce;
  border-bottom: 1px solid #9c9a8a;
`;

const TwoHeads = styled.div`
  display: flex;
  gap: 8px;
  margin-top: 6px;
`;

const SizeRow = styled.div`
  display: flex;
  height: 24px;
  padding: 4px 0 0 7px;
`;

const SizeCell = styled.div`
  flex: none;
  width: ${(p) => (p.$w ? `${p.$w}px` : "auto")};
  display: flex;
  align-items: flex-start;
`;

const SizeLabel = styled.span`
  flex: none;
  width: ${(p) => p.$w}px;
  padding-top: 7px;
  font-size: 11.1px;
  color: #333;
  white-space: nowrap;
`;

const RangeRow = styled.div`
  height: 26px;
  display: flex;
  align-items: center;
  padding: 7px 0 0 7px;
  font-size: 11.1px;
  color: #333;
  span:first-child {
    width: 27px;
  }
  span:nth-child(3) {
    width: 27px;
    margin-left: 12px;
  }
`;

const RangeInput = styled.div`
  flex: none;
  width: 49px;
  height: 19px;
  line-height: 17px;
  text-align: right;
  padding-right: 1px;
  background: #fff;
  border: 1px solid #222;
  font-size: 12px;
`;

const CheckRow = styled.div`
  height: 16px;
  margin-top: ${(p) => p.$top || 0}px;
  padding-left: 8px;
  display: flex;
  align-items: center;
  gap: 5px;
  font-size: 11.1px;
  color: #333;
  white-space: nowrap;
`;

const CheckBox = styled.span`
  flex: none;
  width: 12px;
  height: 12px;
  display: flex;
  align-items: center;
  justify-content: center;
  background: #fff;
  border: 1px solid #8c8a7a;
`;

const DialogFooter = styled.div`
  flex: 1;
  display: flex;
  justify-content: flex-end;
  padding: 8px 0 0 0;
`;

const OkBtn = styled.div`
  width: 86px;
  height: 24px;
  display: flex;
  align-items: center;
  justify-content: center;
  border: 1px solid #1c3050;
  border-radius: 3px;
  background: linear-gradient(180deg, #f6f4ea, #e4e1d0);
  font-size: 12px;
  font-weight: bold;
`;
